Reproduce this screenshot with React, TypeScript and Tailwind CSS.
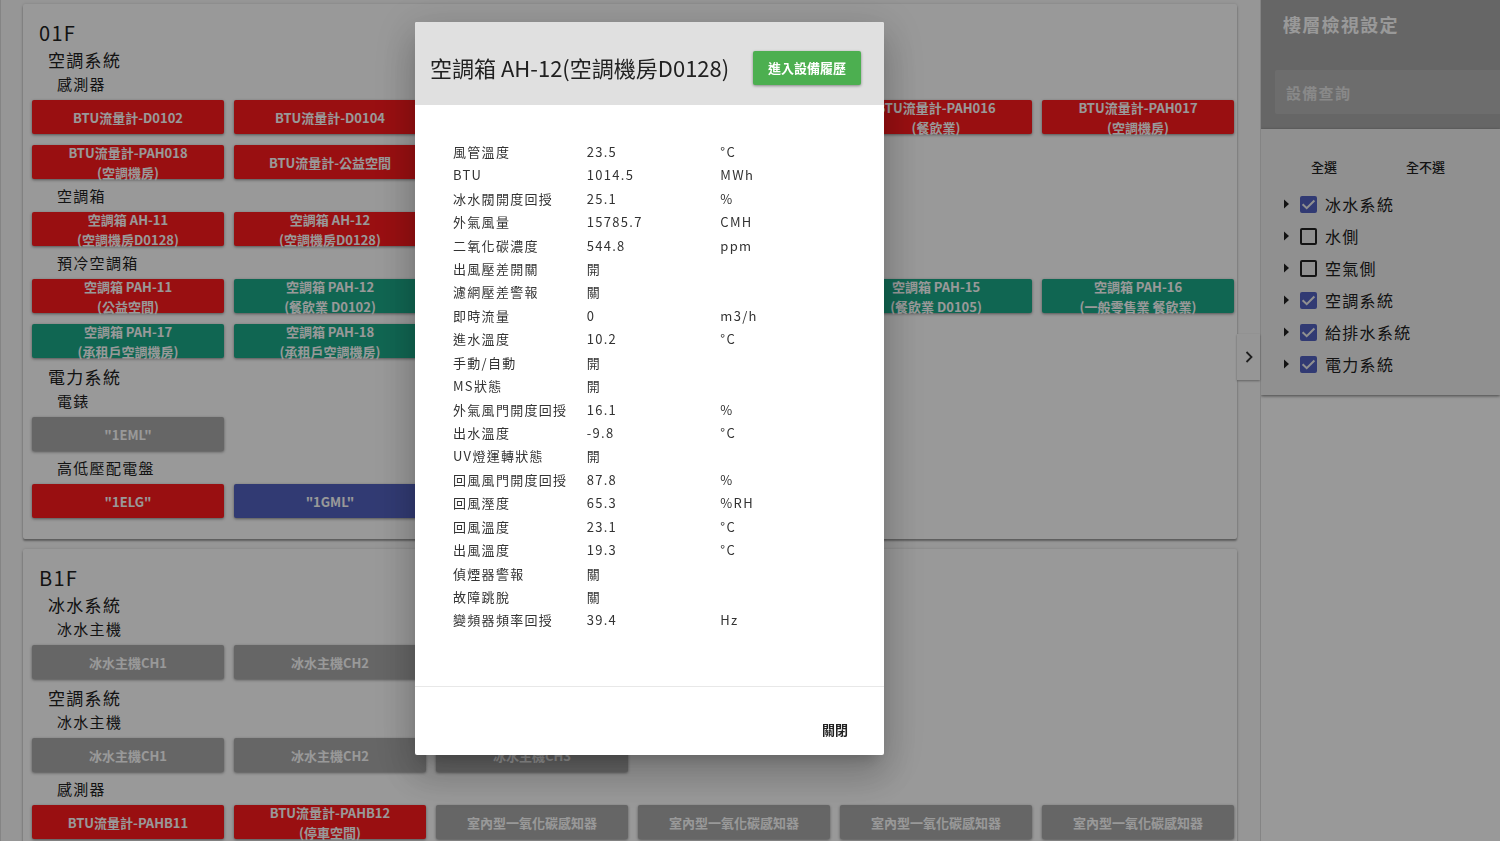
import { useState } from 'react';

const colors = {
    red: 'bg-[#ff191d]',
    green: 'bg-[#1caa89]',
    blue: 'bg-[#5362c0]',
    gray: 'bg-[#aaaaaa]',
};

type Color = keyof typeof colors;
type Device = { name: string; place?: string; color: Color };
type Group = { name: string; devices: Device[] };
type System = { name: string; groups: Group[] };
type Floor = { name: string; systems: System[] };

const floors: Floor[] = [
    {
        name: '01F',
        systems: [
            {
                name: '空調系統',
                groups: [
                    {
                        name: '感測器',
                        devices: [
                            { name: 'BTU流量計-D0102', color: 'red' },
                            { name: 'BTU流量計-D0104', color: 'red' },
                            { name: 'BTU流量計-D0105', color: 'red' },
                            { name: 'BTU流量計-D0106', color: 'red' },
                            { name: 'BTU流量計-PAH016', place: '(餐飲業)', color: 'red' },
                            { name: 'BTU流量計-PAH017', place: '(空調機房)', color: 'red' },
                            { name: 'BTU流量計-PAH018', place: '(空調機房)', color: 'red' },
                            { name: 'BTU流量計-公益空間', color: 'red' },
                        ],
                    },
                    {
                        name: '空調箱',
                        devices: [
                            { name: '空調箱 AH-11', place: '(空調機房D0128)', color: 'red' },
                            { name: '空調箱 AH-12', place: '(空調機房D0128)', color: 'red' },
                        ],
                    },
                    {
                        name: '預冷空調箱',
                        devices: [
                            { name: '空調箱 PAH-11', place: '(公益空間)', color: 'red' },
                            { name: '空調箱 PAH-12', place: '(餐飲業 D0102)', color: 'green' },
                            { name: 'PAH-13', color: 'green' },
                            { name: 'PAH-14', color: 'green' },
                            { name: '空調箱 PAH-15', place: '(餐飲業 D0105)', color: 'green' },
                            { name: '空調箱 PAH-16', place: '(一般零售業 餐飲業)', color: 'green' },
                            { name: '空調箱 PAH-17', place: '(承租戶空調機房)', color: 'green' },
                            { name: '空調箱 PAH-18', place: '(承租戶空調機房)', color: 'green' },
                        ],
                    },
                ],
            },
            {
                name: '電力系統',
                groups: [
                    {
                        name: '電錶',
                        devices: [{ name: '"1EML"', color: 'gray' }],
                    },
                    {
                        name: '高低壓配電盤',
                        devices: [
                            { name: '"1ELG"', color: 'red' },
                            { name: '"1GML"', color: 'blue' },
                        ],
                    },
                ],
            },
        ],
    },
    {
        name: 'B1F',
        systems: [
            {
                name: '冰水系統',
                groups: [
                    {
                        name: '冰水主機',
                        devices: [
                            { name: '冰水主機CH1', color: 'gray' },
                            { name: '冰水主機CH2', color: 'gray' },
                            { name: '冰水主機CH3', color: 'gray' },
                        ],
                    },
                ],
            },
            {
                name: '空調系統',
                groups: [
                    {
                        name: '冰水主機',
                        devices: [
                            { name: '冰水主機CH1', color: 'gray' },
                            { name: '冰水主機CH2', color: 'gray' },
                            { name: '冰水主機CH3', color: 'gray' },
                        ],
                    },
                    {
                        name: '感測器',
                        devices: [
                            { name: 'BTU流量計-PAHB11', color: 'red' },
                            { name: 'BTU流量計-PAHB12', place: '(停車空間)', color: 'red' },
                            { name: '室內型一氧化碳感知器', color: 'gray' },
                            { name: '室內型一氧化碳感知器', color: 'gray' },
                            { name: '室內型一氧化碳感知器', color: 'gray' },
                            { name: '室內型一氧化碳感知器', color: 'gray' },
                        ],
                    },
                ],
            },
        ],
    },
];

const readings = [
    ['風管溫度', '23.5', '°C'],
    ['BTU', '1014.5', 'MWh'],
    ['冰水閥開度回授', '25.1', '%'],
    ['外氣風量', '15785.7', 'CMH'],
    ['二氧化碳濃度', '544.8', 'ppm'],
    ['出風壓差開關', '開', ''],
    ['濾網壓差警報', '關', ''],
    ['即時流量', '0', 'm3/h'],
    ['進水溫度', '10.2', '°C'],
    ['手動/自動', '開', ''],
    ['MS狀態', '開', ''],
    ['外氣風門開度回授', '16.1', '%'],
    ['出水溫度', '-9.8', '°C'],
    ['UV燈運轉狀態', '開', ''],
    ['回風風門開度回授', '87.8', '%'],
    ['回風溼度', '65.3', '%RH'],
    ['回風溫度', '23.1', '°C'],
    ['出風溫度', '19.3', '°C'],
    ['偵煙器警報', '關', ''],
    ['故障跳脫', '關', ''],
    ['變頻器頻率回授', '39.4', 'Hz'],
];

const systemNames = ['冰水系統', '水側', '空氣側', '空調系統', '給排水系統', '電力系統'];
const defaultChecked = ['冰水系統', '空調系統', '給排水系統', '電力系統'];

const DeviceButton = ({ device }: { device: Device }) => (
    <button
        className={`flex h-[34px] flex-col items-center justify-center rounded-xs pt-px text-[13px] leading-5 font-bold tracking-normal whitespace-nowrap text-white shadow-[0_1px_3px_rgba(0,0,0,0.45)] ${colors[device.color]}`}
    >
        <span>{device.name}</span>
        {device.place && <span>{device.place}</span>}
    </button>
);

const FloorCard = ({ floor }: { floor: Floor }) => (
    <section className="rounded-xs bg-white pt-[15px] pr-[3px] pb-[15px] pl-[9px] shadow-[0_2px_2px_rgba(0,0,0,0.35),0_0_3px_rgba(0,0,0,0.15)]">
        <h2 className="pl-[7px] text-xl leading-7">{floor.name}</h2>
        {floor.systems.map((system) => (
            <div key={system.name}>
                <h3 className="pl-4 text-[17px] leading-[26px]">{system.name}</h3>
                {system.groups.map((group) => (
                    <div key={group.name}>
                        <h4 className="pl-[25px] text-[15px] leading-[22px]">
                            {group.name}
                        </h4>
                        <div className="grid grid-cols-6 gap-x-[10px] gap-y-[11px] pt-[5px] pb-[6px]">
                            {group.devices.map((device, i) => (
                                <DeviceButton key={i} device={device} />
                            ))}
                        </div>
                    </div>
                ))}
            </div>
        ))}
    </section>
);

const SideBar = () => {
    const [checked, setChecked] = useState(defaultChecked);

    const toggle = (name: string) => {
        setChecked(
            checked.includes(name)
                ? checked.filter((item) => item !== name)
                : [...checked, name]
        );
    };

    return (
        <aside className="w-60 shrink-0 overflow-hidden border-l border-[#dcdcdc] bg-white">
            <div className="bg-[#aaaaaa] pt-[10px] pb-[15px] pl-[14px]">
                <h1 className="pl-2 text-lg leading-7 font-bold text-white">
                    樓層檢視設定
                </h1>
                <input
                    type="text"
                    aria-label="設備查詢"
                    placeholder="設備查詢"
                    className="mt-8 block h-11 w-full rounded-l-xs bg-[#b6b6b6] pl-[11px] text-[15px] font-bold text-white outline-none placeholder:text-[#e4e4e4]"
                />
            </div>
            <div className="bg-[#f1f1f1] pt-[26px] pb-[15px] pl-[23px] shadow-[0_1px_3px_rgba(0,0,0,0.55)]">
                <div className="flex gap-[69px] pl-[27px] text-[13px] font-medium">
                    <button
                        className="h-6 tracking-normal"
                        onClick={() => setChecked(systemNames)}
                    >
                        全選
                    </button>
                    <button
                        className="h-6 tracking-normal"
                        onClick={() => setChecked([])}
                    >
                        全不選
                    </button>
                </div>
                <ul className="mt-[9px]">
                    {systemNames.map((name) => (
                        <li key={name} className="flex h-8 items-center">
                            <button aria-label={`展開${name}`} className="mr-[11px]">
                                <svg
                                    className="block"
                                    width="5"
                                    height="10"
                                    viewBox="0 0 5 10"
                                >
                                    <path d="M0 0.5 5 5 0 9.5z" fill="#212121" />
                                </svg>
                            </button>
                            <label className="flex items-center gap-2 text-base">
                                <span className="relative flex">
                                    <input
                                        type="checkbox"
                                        checked={checked.includes(name)}
                                        onChange={() => toggle(name)}
                                        className="size-[17px] appearance-none rounded-xs border-2 border-[#222222] checked:border-[#5362c0] checked:bg-[#5362c0]"
                                    />
                                    {checked.includes(name) && (
                                        <svg
                                            className="pointer-events-none absolute inset-0"
                                            width="17"
                                            height="17"
                                            viewBox="0 0 17 17"
                                            fill="none"
                                            stroke="#f1f1f1"
                                            strokeWidth="2"
                                        >
                                            <path d="M2.6 8.2 6.7 12.2 14.4 4.5" />
                                        </svg>
                                    )}
                                </span>
                                {name}
                            </label>
                        </li>
                    ))}
                </ul>
            </div>
        </aside>
    );
};

const DeviceDialog = ({ onClose }: { onClose: () => void }) => (
    <div className="fixed inset-0 flex items-start justify-center bg-black/40 pt-[22px] pr-[201px]">
        <div
            role="dialog"
            aria-labelledby="dialog-title"
            className="w-[469px] overflow-hidden rounded-xs bg-white shadow-[0_10px_14px_-7px_rgba(0,0,0,0.2),0_22px_36px_3px_rgba(0,0,0,0.14),0_8px_43px_8px_rgba(0,0,0,0.12)]"
        >
            <div className="flex items-center justify-between bg-[#e0e0e0] pt-7 pr-[23px] pb-5 pl-[15px]">
                <h2 id="dialog-title" className="text-[22px] leading-[35px] tracking-normal">
                    空調箱 AH-12(空調機房D0128)
                </h2>
                <button className="h-[34px] rounded-xs bg-[#4caf50] px-[15px] text-[13px] font-bold tracking-normal text-white shadow-[0_1px_3px_rgba(0,0,0,0.4)]">
                    進入設備履歷
                </button>
            </div>
            <div className="pt-[35px] pr-[30px] pb-[54px] pl-[38px]">
                <table className="h-[492px] w-full table-fixed text-[#333333]">
                    <tbody>
                        {readings.map(([label, value, unit]) => (
                            <tr key={label}>
                                <td className="p-0 whitespace-nowrap">{label}</td>
                                <td className="p-0">{value}</td>
                                <td className="p-0">{unit}</td>
                            </tr>
                        ))}
                    </tbody>
                </table>
            </div>
            <div className="flex justify-end border-t border-[#e8e8e8] pt-[26px] pr-[21px] pb-2">
                <button
                    onClick={onClose}
                    className="h-[34px] px-[15px] text-[13px] font-bold tracking-normal"
                >
                    關閉
                </button>
            </div>
        </div>
    </div>
);

const App = () => {
    const [open, setOpen] = useState(true);

    return (
        <div className="flex h-screen overflow-hidden bg-[#fafafa] font-['Noto_Sans_CJK_TC',sans-serif] text-[13px] tracking-widest text-[#212121]">
            <div className="relative min-w-0 flex-1 border-l border-[#dddddd]">
                <main className="flex h-full flex-col gap-[10px] overflow-hidden pt-1 pr-[23px] pl-[22px]">
                    {floors.map((floor) => (
                        <FloorCard key={floor.name} floor={floor} />
                    ))}
                </main>
                <button
                    aria-label="收合"
                    className="absolute top-[334px] right-0 flex h-[46px] w-[23px] items-center justify-center bg-[#fafafa] shadow-[0_1px_2px_rgba(0,0,0,0.35)]"
                >
                    <svg width="8" height="12" viewBox="0 0 8 12" fill="none">
                        <path d="M1.5 1 6.5 6 1.5 11" stroke="#333333" strokeWidth="1.8" />
                    </svg>
                </button>
            </div>
            <SideBar />
            {open && <DeviceDialog onClose={() => setOpen(false)} />}
        </div>
    );
};

export default App;
